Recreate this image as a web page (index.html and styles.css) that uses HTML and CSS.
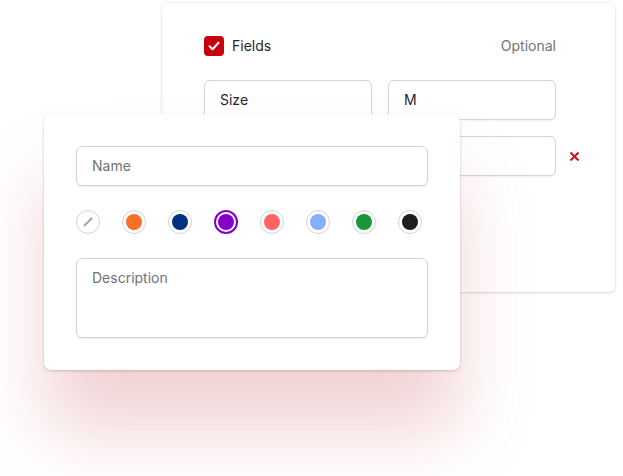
FILE: index.html
```html
<!DOCTYPE html>
<html>
<head>
<meta charset="utf-8">
<link rel="stylesheet" href="styles.css">
</head>
<body>
<div class="stage">
  <div class="back-card">
    <div class="head-row">
      <span class="check"><svg width="12" height="10" viewBox="0 0 12 10"><path d="M1.5 5.2 L4.6 8.2 L10.5 1.8" fill="none" stroke="#fff" stroke-width="2" stroke-linecap="round" stroke-linejoin="round"/></svg></span>
      <span class="fields">Fields</span>
      <span class="optional">Optional</span>
    </div>
    <div class="field-row">
      <div class="box">Size</div>
      <div class="box">M</div>
    </div>
    <div class="field-row">
      <div class="box"></div>
      <div class="box"></div>
      <span class="remove"><svg width="9" height="9" viewBox="0 0 9 9"><path d="M1.2 1.2 L7.8 7.8 M7.8 1.2 L1.2 7.8" stroke="#d0101a" stroke-width="2" stroke-linecap="square"/></svg></span>
    </div>
  </div>

  <div class="front-card">
    <div class="input">Name</div>
    <div class="swatches">
      <span class="swatch none"><svg width="24" height="24" viewBox="0 0 24 24"><path d="M8.5 15.5 L15.5 8.5" stroke="#a3a3a8" stroke-width="2" stroke-linecap="round"/></svg></span>
      <span class="swatch"><i class="dot c-orange"></i></span>
      <span class="swatch"><i class="dot c-navy"></i></span>
      <span class="swatch selected"><i class="dot c-purple"></i></span>
      <span class="swatch"><i class="dot c-coral"></i></span>
      <span class="swatch"><i class="dot c-sky"></i></span>
      <span class="swatch"><i class="dot c-green"></i></span>
      <span class="swatch"><i class="dot c-black"></i></span>
    </div>
    <div class="input textarea">Description</div>
  </div>
</div>
</body>
</html>
```
FILE: styles.css
```css
* { box-sizing: border-box; }
html, body { margin: 0; padding: 0; background: #fff; }
body {
  font-family: Inter, "Noto Sans", sans-serif;
  font-size: 14px;
  color: #27272a;
  width: 623px;
  height: 476px;
  overflow: hidden;
}
.stage {
  position: relative;
  width: 623px;
  height: 476px;
  padding: 3px 0 0 162px;
}
.back-card {
  width: 453px;
  height: 289px;
  background: #fff;
  border-radius: 6px;
  box-shadow: 0 0 0 1px rgba(0,0,0,0.035), 0 1px 3px rgba(0,0,0,0.12);
  padding: 32px 0 0 42px;
}
.head-row {
  display: flex;
  align-items: center;
  width: 352px;
  height: 21px;
}
.check {
  width: 20px;
  height: 20px;
  border-radius: 4px;
  background: #c8000d;
  display: flex;
  align-items: center;
  justify-content: center;
}
.fields {
  margin-left: 8px;
  color: #27272a;
}
.optional {
  margin-left: auto;
  color: #71717a;
}
.field-row {
  display: flex;
  align-items: center;
  gap: 16px;
  margin-top: 24px;
}
.field-row + .field-row { margin-top: 16px; }
.box {
  width: 168px;
  height: 40px;
  border: 1px solid #d4d4d8;
  border-radius: 6px;
  box-shadow: 0 1px 2px rgba(0,0,0,0.06);
  padding: 0 15px 1px;
  display: flex;
  align-items: center;
  color: #27272a;
  background: #fff;
}
.remove {
  display: flex;
  margin-left: -2px;
}
.front-card {
  position: absolute;
  left: 44px;
  top: 114px;
  width: 416px;
  height: 256px;
  background: #fff;
  border-radius: 7px;
  padding: 32px;
  box-shadow: 0 1px 3px rgba(60,0,0,0.2), 0 62px 72px -2px rgba(205,80,90,0.26);
}
.input {
  height: 40px;
  border: 1px solid #d4d4d8;
  border-radius: 6px;
  box-shadow: 0 1px 2px rgba(0,0,0,0.08);
  padding: 0 15px 1px;
  display: flex;
  align-items: center;
  color: #71717a;
}
.textarea {
  height: 80px;
  align-items: flex-start;
  padding-top: 10px;
}
.swatches {
  display: flex;
  gap: 22px;
  margin: 24px 0;
}
.swatch {
  width: 24px;
  height: 24px;
  border-radius: 50%;
  border: 1px solid #d4d4d8;
  display: flex;
  align-items: center;
  justify-content: center;
  background: #fff;
}
.swatch.none svg { margin: -1px; }
.swatch.selected { border: 2px solid #8400c6; }
.dot {
  display: block;
  width: 16px;
  height: 16px;
  border-radius: 50%;
}
.c-orange { background: #f86f2c; }
.c-navy { background: #00307f; }
.c-purple { background: #8400c6; }
.c-coral { background: #ff6363; }
.c-sky { background: #84b0ff; }
.c-green { background: #189639; }
.c-black { background: #1d1d20; }
```
